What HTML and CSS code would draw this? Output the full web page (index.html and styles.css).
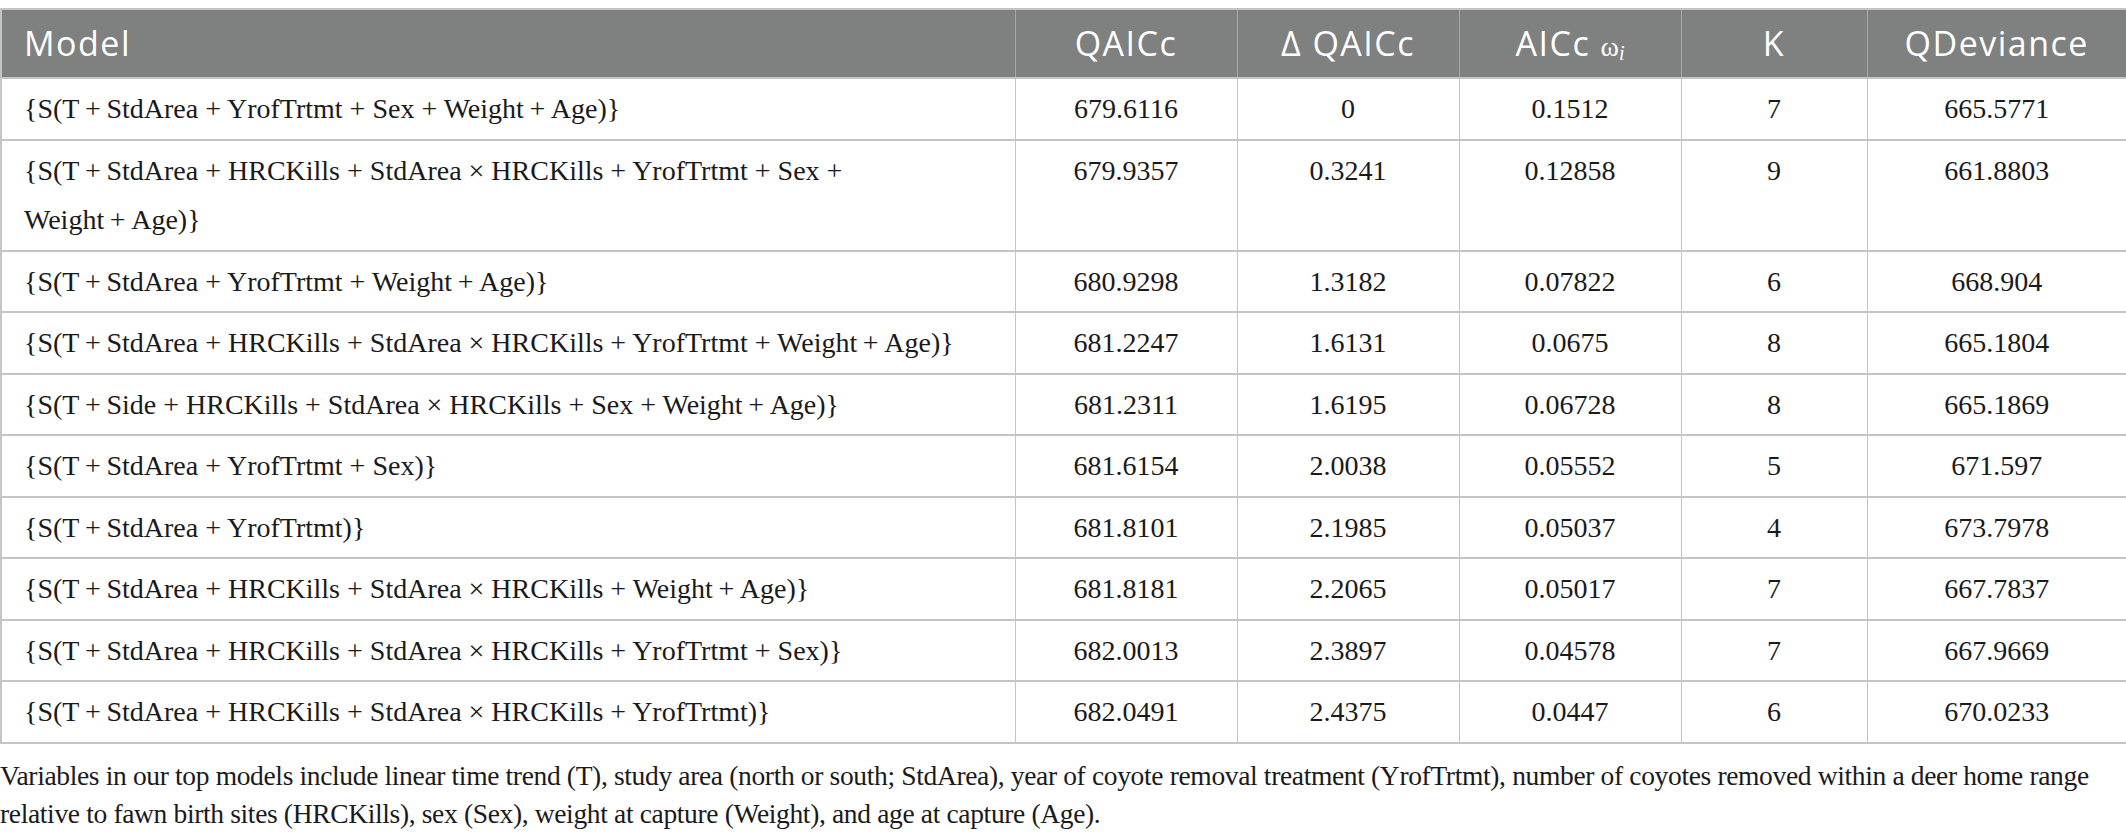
FILE: index.html
```html
<!DOCTYPE html>
<html lang="en">
<head>
    <meta charset="UTF-8">
    <title>Model Selection Table</title>
    <link rel="stylesheet" href="styles.css">
</head>
<body>
    <div class="table-wrap">
        <table class="model-table">
            <colgroup>
                <col class="col-model">
                <col class="col-num">
                <col class="col-num">
                <col class="col-num">
                <col class="col-k">
                <col class="col-dev">
            </colgroup>
            <thead>
                <tr>
                    <th class="left">Model</th>
                    <th>QAICc</th>
                    <th>&Delta; QAICc</th>
                    <th>AICc <span class="omega">&omega;<sub><i>i</i></sub></span></th>
                    <th>K</th>
                    <th>QDeviance</th>
                </tr>
            </thead>
            <tbody>
                <tr>
                    <td class="left">{S(T&thinsp;+&thinsp;StdArea + YrofTrtmt + Sex + Weight&thinsp;+&thinsp;Age)}</td>
                    <td>679.6116</td>
                    <td>0</td>
                    <td>0.1512</td>
                    <td>7</td>
                    <td>665.5771</td>
                </tr>
                <tr>
                    <td class="left">{S(T&thinsp;+&thinsp;StdArea + HRCKills + StdArea &times; HRCKills + YrofTrtmt + Sex +<br>Weight&thinsp;+&thinsp;Age)}</td>
                    <td>679.9357</td>
                    <td>0.3241</td>
                    <td>0.12858</td>
                    <td>9</td>
                    <td>661.8803</td>
                </tr>
                <tr>
                    <td class="left">{S(T&thinsp;+&thinsp;StdArea + YrofTrtmt + Weight&thinsp;+&thinsp;Age)}</td>
                    <td>680.9298</td>
                    <td>1.3182</td>
                    <td>0.07822</td>
                    <td>6</td>
                    <td>668.904</td>
                </tr>
                <tr>
                    <td class="left">{S(T&thinsp;+&thinsp;StdArea + HRCKills + StdArea &times; HRCKills + YrofTrtmt + Weight&thinsp;+&thinsp;Age)}</td>
                    <td>681.2247</td>
                    <td>1.6131</td>
                    <td>0.0675</td>
                    <td>8</td>
                    <td>665.1804</td>
                </tr>
                <tr>
                    <td class="left">{S(T&thinsp;+&thinsp;Side + HRCKills + StdArea &times; HRCKills + Sex + Weight&thinsp;+&thinsp;Age)}</td>
                    <td>681.2311</td>
                    <td>1.6195</td>
                    <td>0.06728</td>
                    <td>8</td>
                    <td>665.1869</td>
                </tr>
                <tr>
                    <td class="left">{S(T&thinsp;+&thinsp;StdArea + YrofTrtmt + Sex)}</td>
                    <td>681.6154</td>
                    <td>2.0038</td>
                    <td>0.05552</td>
                    <td>5</td>
                    <td>671.597</td>
                </tr>
                <tr>
                    <td class="left">{S(T&thinsp;+&thinsp;StdArea + YrofTrtmt)}</td>
                    <td>681.8101</td>
                    <td>2.1985</td>
                    <td>0.05037</td>
                    <td>4</td>
                    <td>673.7978</td>
                </tr>
                <tr>
                    <td class="left">{S(T&thinsp;+&thinsp;StdArea + HRCKills + StdArea &times; HRCKills + Weight&thinsp;+&thinsp;Age)}</td>
                    <td>681.8181</td>
                    <td>2.2065</td>
                    <td>0.05017</td>
                    <td>7</td>
                    <td>667.7837</td>
                </tr>
                <tr>
                    <td class="left">{S(T&thinsp;+&thinsp;StdArea + HRCKills + StdArea &times; HRCKills + YrofTrtmt + Sex)}</td>
                    <td>682.0013</td>
                    <td>2.3897</td>
                    <td>0.04578</td>
                    <td>7</td>
                    <td>667.9669</td>
                </tr>
                <tr>
                    <td class="left">{S(T&thinsp;+&thinsp;StdArea + HRCKills + StdArea &times; HRCKills + YrofTrtmt)}</td>
                    <td>682.0491</td>
                    <td>2.4375</td>
                    <td>0.0447</td>
                    <td>6</td>
                    <td>670.0233</td>
                </tr>
            </tbody>
        </table>
        <p class="table-note">Variables in our top models include linear time trend (T), study area (north or south; StdArea), year of coyote removal treatment (YrofTrtmt), number of coyotes removed within a deer home range relative to fawn birth sites (HRCKills), sex (Sex), weight at capture (Weight), and age at capture (Age).</p>
    </div>
</body>
</html>
```

FILE: styles.css
```css
/* Global */
body {
    margin: 0;
    padding: 8px 0 0 0;
    background-color: #ffffff;
    color: #1a1a1a;
    font-family: "Liberation Serif", "Times New Roman", serif;
}

.table-wrap {
    width: 2126px;
}

/* Table */
.model-table {
    width: 100%;
    border-collapse: collapse;
    table-layout: fixed;
    border: 2px solid #c4c4c4;
}

.col-model { width: 1014px; }
.col-num { width: 222px; }
.col-k { width: 186px; }
.col-dev { width: 260px; }

.model-table th {
    background-color: #7f8080;
    color: #ffffff;
    font-family: "Open Sans", "DejaVu Sans", sans-serif;
    font-weight: normal;
    font-size: 34px;
    letter-spacing: 1.5px;
    line-height: 50px;
    padding: 8px 10px 9px 10px;
    text-align: center;
    border-left: 1px solid #a8a8a8;
}

.model-table th:first-child {
    border-left: none;
}

.model-table th .omega {
    font-family: "Liberation Serif", serif;
    font-size: 28px;
    letter-spacing: 0;
    line-height: 1;
}

.model-table th sub {
    font-size: 20px;
    vertical-align: -4px;
    line-height: 0;
}

.model-table td {
    font-size: 28px;
    line-height: 49.5px;
    padding: 5px 10px 5px 10px;
    text-align: center;
    vertical-align: top;
    border-top: 2px solid #c4c4c4;
    border-left: 1px solid #c4c4c4;
}

.model-table .left {
    text-align: left;
    padding-left: 22px;
}

/* Footnote */
.table-note {
    margin: 13px 0 0 0;
    font-size: 27.5px;
    letter-spacing: -0.35px;
    line-height: 38px;
}
```
